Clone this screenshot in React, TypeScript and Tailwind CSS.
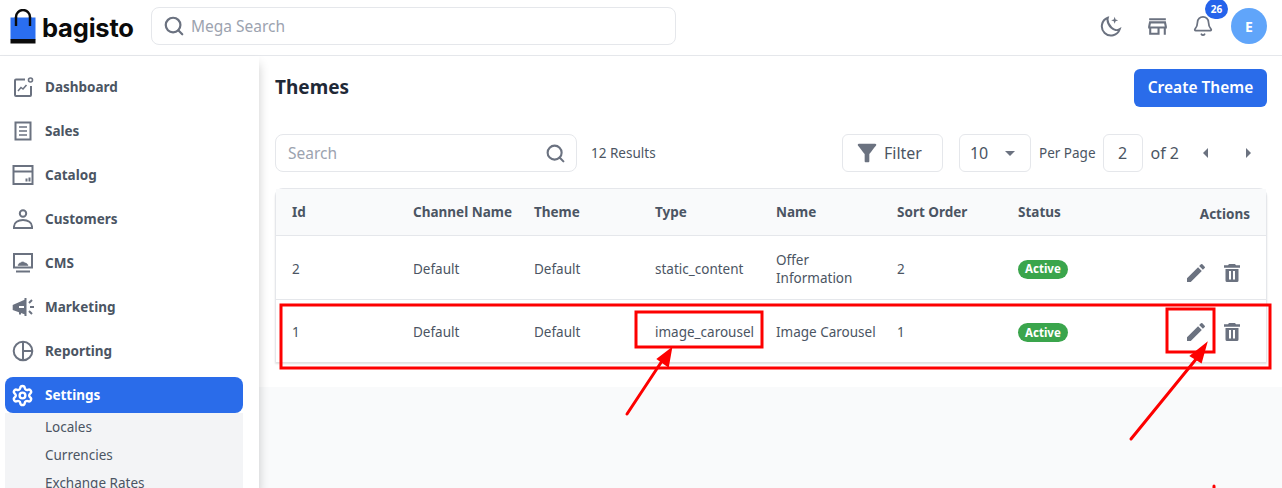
import React from "react";
import { MdEdit, MdOutlineStore, MdFilterAlt, MdArrowDropDown, MdArrowLeft, MdArrowRight } from "react-icons/md";
import { Search, Bell, Settings } from "lucide-react";

const stroke = { fill: "none", stroke: "#6b7280", strokeWidth: 2 } as const;

const Dash = () => (
  <svg width="24" height="24" viewBox="0 0 24 24" {...stroke}>
    <path d="M14 4.500H5a1 1 0 0 0-1 1V20a1 1 0 0 0 1 1h14a1 1 0 0 0 1-1v-9" />
    <circle cx="19.500" cy="5" r="2" strokeWidth="1.600" />
    <path d="M7 16l3-3.500 2 1.500 3.500-4" strokeWidth="1.500" />
  </svg>
);
const Sales = () => (
  <svg width="24" height="24" viewBox="0 0 24 24" {...stroke}>
    <rect x="4.500" y="3.500" width="15" height="17" />
    <path d="M8 8h8M8 12h8M8 16h8" strokeWidth="1.600" />
  </svg>
);
const Catalog = () => (
  <svg width="24" height="24" viewBox="0 0 24 24" {...stroke}>
    <rect x="2.500" y="3" width="19" height="18" />
    <path d="M2.500 8.500h19" />
    <path d="M15.500 15.500v3M18.500 14.500v4" strokeWidth="2" />
  </svg>
);
const Customers = () => (
  <svg width="24" height="24" viewBox="0 0 24 24" {...stroke}>
    <circle cx="12" cy="6.500" r="3.200" />
    <path d="M3 21v-1.500c0-4 4-6.500 9-6.500s9 2.500 9 6.500V21z" />
  </svg>
);
const Cms = () => (
  <svg width="24" height="24" viewBox="0 0 24 24" {...stroke}>
    <rect x="3" y="3" width="18" height="13.500" />
    <path d="M5 20.500h14" />
    <path d="M7 14.500c.5-2 1.500-2.500 2.500-2.500.5-1.500 3.500-1.500 4.500 0 1 0 2.500.5 3 2.500z" fill="#6b7280" strokeWidth="0.600" />
  </svg>
);
const Marketing = () => (
  <svg width="24" height="24" viewBox="0 0 24 24" {...stroke}>
    <path d="M2.500 10.500l11.500-5v13l-11.500-4z" fill="#6b7280" strokeWidth="1.600" />
    <path d="M8 12h5" stroke="#fff" strokeWidth="2" />
    <path d="M9 16v3.500M14.500 3v18M18 8l3-3M18 16l3 3M19 12h4" />
  </svg>
);
const Reporting = () => (
  <svg width="24" height="24" viewBox="0 0 24 24" {...stroke}>
    <circle cx="12" cy="12" r="9.300" />
    <path d="M12 3v18M12 12h9" />
  </svg>
);
const Moon = () => (
  <svg width="22" height="22" viewBox="0 0 24 24" fill="none" stroke="#6b7280" strokeWidth="2.200">
    <path d="M8.500 3a10 10 0 1 0 13 12.500c-2.500 1.500-6.500 1-9-1.500s-5-7-4-11z" />
    <path d="M16 2l1 2.800 2.800 1-2.800 1-1 2.800-1-2.800-2.800-1 2.800-1z" fill="#6b7280" stroke="none" />
  </svg>
);
const Trash = () => (
  <svg width="24" height="24" viewBox="0 0 24 24" fill="#6b7280">
    <path d="M9 3h6l1 1.300h4v2.500H4V4.300h4z" />
    <path fillRule="evenodd" d="M5.500 8h13v11.500A1.500 1.500 0 0 1 17 21H7a1.500 1.500 0 0 1-1.500-1.500zM9 10v8.500h2V10zM13 10v8.500h2V10z" />
  </svg>
);
const Bag = () => (
  <svg width="26" height="35" viewBox="0 0 26 35">
    <path d="M6 17V8a7 7 0 0 1 14 0v9" fill="none" stroke="#0b0b0b" strokeWidth="2.400" />
    <rect x="0.500" y="8.500" width="25" height="22" fill="#2a6ef0" />
    <path d="M6 8V17M20 8V17" stroke="#0b0b0b" strokeWidth="2.400" />
    <rect x="0.500" y="30" width="25" height="4.500" fill="#0b0b0b" />
  </svg>
);

const nav: [string, React.ReactNode][] = [
  ["Dashboard", <Dash />],
  ["Sales", <Sales />],
  ["Catalog", <Catalog />],
  ["Customers", <Customers />],
  ["CMS", <Cms />],
  ["Marketing", <Marketing />],
  ["Reporting", <Reporting />],
];

const grid = "grid grid-cols-[121px_121px_121px_121px_121px_121px_121px_1fr] pl-4 pr-4 items-center";
const rows = [
  ["2", "Default", "Default", "static_content", "Offer Information", "2"],
  ["1", "Default", "Default", "image_carousel", "Image Carousel", "1"],
];

export default function App() {
  return (
    <div className="relative h-[488px] w-[1282px] overflow-hidden bg-white font-['Noto_Sans',sans-serif] text-[#4b5563]">
      <header className="flex h-[56px] items-center justify-between border-b border-[#e5e7eb] bg-white pb-[3px] pl-[10px] pr-[15px]">
        <div className="flex items-center">
          <div className="flex w-[141px] items-center gap-[6px]">
            <Bag />
            <span className="mt-[3px] font-['Inter',sans-serif] text-[25.500px] font-bold leading-none tracking-[-0.2px] text-[#0b0b0b]">bagisto</span>
          </div>
          <div className="flex h-[38px] w-[525px] items-center gap-[6px] rounded-lg border border-[#e5e7eb] pl-[11px]">
            <Search size={22} color="#6b7280" strokeWidth={2.400} />
            <span className="pt-[1px] text-[15.500px] text-[#9ca3af]">Mega Search</span>
          </div>
        </div>
        <div className="flex items-center">
          <span className="mr-[23px] flex"><Moon /></span>
          <span className="mr-[22px] flex"><MdOutlineStore size={25} color="#6b7280" /></span>
          <span className="relative mr-[17px] flex">
            <Bell size={22} color="#6b7280" strokeWidth={1.900} />
            <span className="absolute -top-[16px] left-[13px] flex h-[20px] w-[23px] items-center justify-center rounded-full bg-[#2563eb] text-[10px] font-bold text-white">26</span>
          </span>
          <span className="flex h-9 w-9 items-center justify-center rounded-full bg-[#60a5fa] text-[14px] font-bold text-white">E</span>
        </div>
      </header>
      <div className="flex h-[432px]">
        <aside className="z-10 flex h-full w-[259px] shrink-0 flex-col bg-white pl-[5px] pr-[16px] pt-[9px] shadow-[0_8px_10px_rgba(0,0,0,0.2)]">
          {nav.map(([label, icon]) => (
            <div key={label} className="flex h-[44px] shrink-0 items-center gap-[10px] pl-[5px] text-[13.500px] font-bold text-[#4b5563]">
              <span className="flex w-[25px] justify-center">{icon}</span>
              {label}
            </div>
          ))}
          <div className="mt-[4px] flex h-[36px] shrink-0 items-center gap-[10px] rounded-lg bg-[#2a6cea] pl-[5px] text-[13.500px] font-bold text-white">
            <span className="flex w-[25px] justify-center"><Settings size={23} color="#fff" strokeWidth={2.500} /></span>
            Settings
          </div>
          <div className="flex flex-1 flex-col bg-[#f3f4f6] pl-[40px] text-[13.500px] text-[#4b5563]">
            <span className="flex h-[28px] shrink-0 items-center">Locales</span>
            <span className="flex h-[28px] shrink-0 items-center">Currencies</span>
            <span className="flex h-[28px] shrink-0 items-center">Exchange Rates</span>
          </div>
        </aside>
        <main className="flex flex-1 flex-col bg-[#f9fafb]">
          <div className="h-[331px] bg-white pl-4 pr-[15px]">
            <div className="flex h-[62px] items-center justify-between">
              <h1 className="text-[19px] font-bold text-[#1f2937]">Themes</h1>
              <button className="mt-[1px] h-[38px] w-[133px] rounded-md bg-[#2a6cea] text-[15.500px] font-semibold text-white">Create Theme</button>
            </div>
            <div className="mt-[16px] flex h-[38px] items-center">
              <div className="flex h-[38px] w-[302px] items-center justify-between rounded-lg border border-[#e5e7eb] pl-3 pr-[10px] text-[#9ca3af]">
                <span className="pt-[1px] text-[15.500px]">Search</span>
                <Search size={21} color="#6b7280" strokeWidth={2.400} />
              </div>
              <span className="ml-[14px] text-[13.500px]">12 Results</span>
              <div className="ml-auto mr-[3px] flex items-center">
                <div className="flex h-[38px] w-[101px] items-center gap-[3px] rounded-md border border-[#e5e7eb] pl-[10px] text-[16px]">
                  <MdFilterAlt size={28} color="#6b7280" /> Filter
                </div>
                <div className="ml-[16px] flex h-[38px] w-[72px] items-center justify-between rounded-md border border-[#e5e7eb] pl-[10px] pr-[8px] text-[16px]">
                  10 <MdArrowDropDown size={24} color="#6b7280" />
                </div>
                <span className="ml-[8px] text-[13.500px]">Per Page</span>
                <div className="ml-[7px] flex h-[38px] w-[40px] items-center justify-center rounded-md border border-[#e5e7eb] text-[16px]">2</div>
                <span className="ml-[8px] text-[16px]">of 2</span>
                <span className="ml-[11px] flex w-[32px] justify-center"><MdArrowLeft size={24} color="#6b7280" /></span>
                <span className="ml-[10px] flex w-[32px] justify-center"><MdArrowRight size={24} color="#6b7280" /></span>
              </div>
            </div>
            <div className="mt-[16px] rounded-lg rounded-b-none border border-b-0 border-[#e5e7eb] shadow-[0_2px_2px_rgba(0,0,0,0.12)]">
              <div className={`${grid} h-[47px] border-b border-[#e5e7eb] bg-[#f9fafb] text-[13.500px] font-bold`}>
                {["Id", "Channel Name", "Theme", "Type", "Name", "Sort Order", "Status"].map((h) => (
                  <span key={h}>{h}</span>
                ))}
                <span className="mt-[4px] text-right">Actions</span>
              </div>
              {rows.map((r, i) => (
                <div key={i} className={`${grid} pt-[2px] text-[13.500px] ${i === 0 ? "h-[64px] border-b border-[#e5e7eb]" : "h-[62px]"}`}>
                  {r.map((c, j) => (
                    <span key={j} className="pr-5 leading-[18px]">{c}</span>
                  ))}
                  <span>
                    <span className="inline-flex h-[19px] items-center rounded-full bg-[#3aa54c] px-[7px] text-[11.500px] font-bold text-white">Active</span>
                  </span>
                  <span className={`flex justify-end gap-[12px] pr-[6px] ${i === 0 ? "pt-[8px]" : ""}`}>
                    <MdEdit size={24} color="#6b7280" />
                    <Trash />
                  </span>
                </div>
              ))}
            </div>
          </div>
        </main>
      </div>
      <svg className="pointer-events-none absolute left-0 top-0" width="1282" height="488" fill="none" stroke="#fd0000" strokeLinecap="round">
        <rect x="281" y="305" width="989" height="63" strokeWidth="3" />
        <rect x="636" y="312" width="126" height="35" strokeWidth="3" />
        <rect x="1167" y="309" width="47" height="43" strokeWidth="3" />
        <path d="M627 414L664 358" strokeWidth="3" />
        <path d="M671 349L658 359L668 366Z" fill="#fd0000" strokeWidth="2" />
        <path d="M1131 439L1197 358" strokeWidth="3" />
        <path d="M1206 344L1191 356L1201 362Z" fill="#fd0000" strokeWidth="2" />
        <path d="M1214 486L1214 488" strokeWidth="3" />
      </svg>
    </div>
  );
}
